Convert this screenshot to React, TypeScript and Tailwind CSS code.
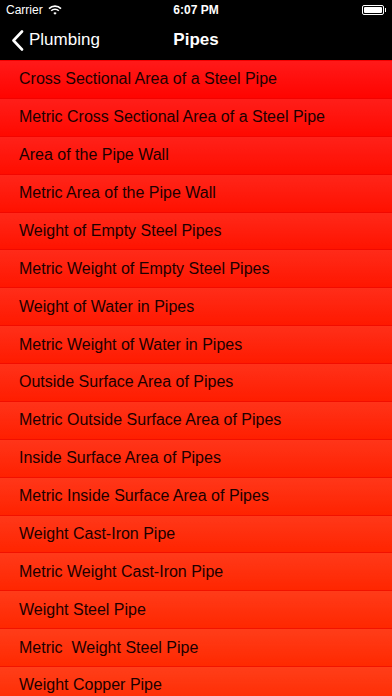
import React from "react";

const items = [
  "Cross Sectional Area of a Steel Pipe",
  "Metric Cross Sectional Area of a Steel Pipe",
  "Area of the Pipe Wall",
  "Metric Area of the Pipe Wall",
  "Weight of Empty Steel Pipes",
  "Metric Weight of Empty Steel Pipes",
  "Weight of Water in Pipes",
  "Metric Weight of Water in Pipes",
  "Outside Surface Area of Pipes",
  "Metric Outside Surface Area of Pipes",
  "Inside Surface Area of Pipes",
  "Metric Inside Surface Area of Pipes",
  "Weight Cast-Iron Pipe",
  "Metric Weight Cast-Iron Pipe",
  "Weight Steel Pipe",
  "Metric\u00a0 Weight Steel Pipe",
  "Weight Copper Pipe",
];

export default function App() {
  return (
    <div
      className="w-[392px] h-[696px] overflow-hidden bg-black flex flex-col"
      style={{ fontFamily: '"Liberation Sans", Arial, sans-serif' }}
    >
      {/* status bar */}
      <div className="h-[20px] shrink-0 flex items-center justify-between px-[6px] text-white text-[12px] relative">
        <div className="flex items-center gap-[5px]">
          <span>Carrier</span>
          <svg width="14" height="10" viewBox="0 0 14 10">
            <path d="M1 3.6 A8.5 8.5 0 0 1 13 3.6" stroke="white" strokeWidth="1.6" fill="none" />
            <path d="M3.2 5.8 A5.4 5.4 0 0 1 10.8 5.8" stroke="white" strokeWidth="1.6" fill="none" />
            <path d="M5.3 8 L7 9.8 L8.7 8 A2.4 2.4 0 0 0 5.3 8 Z" fill="white" />
          </svg>
        </div>
        <span className="absolute left-1/2 -translate-x-1/2 font-bold">6:07 PM</span>
        <div className="flex items-center">
          <div className="w-[22px] h-[10px] rounded-[2px] border border-white p-[1px]">
            <div className="w-full h-full bg-white rounded-[1px]" />
          </div>
          <div className="w-[1.5px] h-[4px] bg-white ml-[1px]" />
        </div>
      </div>
      {/* nav bar */}
      <div className="h-[40px] shrink-0 flex items-center relative text-white">
        <div className="flex items-center pl-[11px] gap-[5px]">
          <svg width="13" height="21" viewBox="0 0 13 21">
            <path d="M11 1.5 L2.5 10.5 L11 19.5" stroke="white" strokeWidth="2.6" fill="none" strokeLinecap="round" strokeLinejoin="round" />
          </svg>
          <span className="text-[17px]">Plumbing</span>
        </div>
        <span className="absolute left-1/2 -translate-x-1/2 text-[17px] font-bold">Pipes</span>
      </div>
      {/* list */}
      <div className="flex-1 min-h-0 flex flex-col bg-gradient-to-b from-[#ff0000] to-[#ff2a00]">
        {items.map((t) => (
          <div
            key={t}
            className="h-[37.875px] shrink-0 flex items-center pl-[19px] border-t border-[#e60000]/50 bg-gradient-to-b from-white/10 to-transparent"
          >
            <span className="text-[16px] text-[#1c0000] whitespace-pre">{t}</span>
          </div>
        ))}
      </div>
    </div>
  );
}
